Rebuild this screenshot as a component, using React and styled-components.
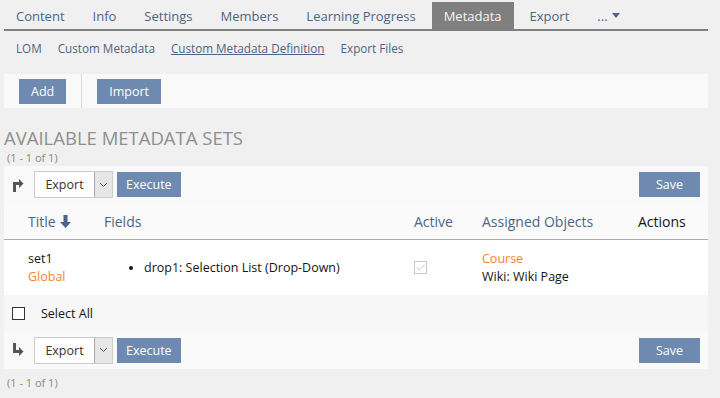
import React from 'react';
import styled, {createGlobalStyle} from 'styled-components';

const Global = createGlobalStyle`
    body {
        margin: 0;
        background: #f0f0f0;
        font-family: "Open Sans", "Liberation Sans", sans-serif;
        color: #161616;
    }
`;

const Page = styled.div`
    width: 704px;
    padding: 0 12px 0 4px;
`;

const Tabs = styled.ul`
    list-style: none;
    display: flex;
    margin: 0;
    padding: 2px 0 0 0;
    height: 27px;
    border-bottom: 2px solid #7f7f7f;
`;

const Tab = styled.li`
    display: flex;
    align-items: center;
    padding: 0 12px;
    margin-right: 4px;
    font-size: 13px;
    color: ${p => (p.active ? '#f4f4f4' : '#4c6586')};
    background: ${p => (p.active ? '#7f7f7f' : 'transparent')};
`;

const Caret = styled.span`
    display: inline-block;
    margin-left: 4px;
    border-left: 4px solid transparent;
    border-right: 4px solid transparent;
    border-top: 5px solid #4c6586;
`;

const SubTabs = styled.ul`
    list-style: none;
    display: flex;
    margin: 0;
    padding: 0 0 0 12px;
    height: 34px;
    align-items: center;
`;

const SubTab = styled.li`
    font-size: 11.7px;
    margin-right: 16px;
    color: #4c6586;
    text-decoration: ${p => (p.active ? 'underline' : 'none')};
`;

const Toolbar = styled.div`
    display: flex;
    align-items: center;
    margin-top: 9px;
    height: 34px;
    background: #f9f9f9;
    padding-left: 15px;
`;

const Sep = styled.div`
    width: 1px;
    align-self: stretch;
    background: #dddddd;
    margin: 0 15px;
`;

const Button = styled.button`
    height: 25px;
    padding: 0 ${p => p.pad || 12}px;
    border: none;
    background: #6e8ab0;
    color: #ffffff;
    font-family: inherit;
    font-size: 12.5px;
`;

const Heading = styled.h2`
    margin: 18px 0 0 0;
    font-size: 18.5px;
    font-weight: 400;
    line-height: 24px;
    color: #8f8f8f;
    text-transform: uppercase;
`;

const Count = styled.div`
    font-size: 11px;
    color: #888888;
    padding-left: 3px;
    line-height: 13px;
    margin-top: ${p => p.top || 1}px;
`;

const Panel = styled.div`
    margin-top: 2px;
`;

const ActionBar = styled.div`
    display: flex;
    align-items: center;
    height: ${p => p.h}px;
    background: #f9f9f9;
    padding: 0 8px 0 4px;
    gap: 4px;
`;

const ArrowBox = styled.div`
    width: 20px;
    margin-right: 2px;
    display: flex;
    justify-content: center;
`;

const Select = styled.div`
    display: flex;
    width: 79px;
    height: 27px;
    box-sizing: border-box;
    border: 1px solid #cccccc;
    background: #ffffff;
`;

const SelectText = styled.span`
    flex: 1;
    display: flex;
    align-items: center;
    justify-content: center;
    font-size: 12.5px;
    color: #333333;
`;

const SelectArrow = styled.span`
    width: 17px;
    display: flex;
    align-items: center;
    justify-content: center;
    background: #e6e6e6;
    border-left: 1px solid #aaaaaa;
`;

const Spacer = styled.div`
    flex: 1;
`;

const Row = styled.div`
    display: grid;
    grid-template-columns: 76px 310px 68px 156px 1fr;
    align-items: center;
    padding-left: 24px;
    height: ${p => p.h}px;
    background: ${p => p.bg};
    border-bottom: ${p => (p.line ? '1px solid #aaaaaa' : 'none')};
    font-size: 12.5px;
`;

const Head = styled.div`
    color: ${p => (p.dark ? '#161616' : '#4c6586')};
    font-size: 14px;
    display: flex;
    align-items: center;
    gap: 4px;
`;

const Cell = styled.div`
    display: flex;
    flex-direction: column;
    line-height: 18px;
`;

const Orange = styled.span`
    color: #f5833a;
`;

const Fields = styled.ul`
    margin: 0;
    padding-left: 40px;
    list-style: disc;
`;

const Check = styled.span`
    display: inline-block;
    width: 13px;
    height: 13px;
    box-sizing: border-box;
    border: 1px solid ${p => (p.disabled ? '#c8c8c8' : '#333333')};
    background: #ffffff;
    position: relative;
`;

const SelectAll = styled.div`
    display: flex;
    align-items: center;
    gap: 16px;
    height: 36px;
    padding-left: 8px;
    background: #f7f7f7;
    font-size: 12.5px;
`;

function Chevron() {
    return (
        <svg width="9" height="6" viewBox="0 0 9 6">
            <path d="M1 1 L4.5 4.5 L8 1" fill="none" stroke="#555" strokeWidth="1" />
        </svg>
    );
}

function UpArrow() {
    return (
        <svg width="12" height="15" viewBox="0 0 12 15">
            <path d="M1 15 V5 H7 V2 L11.5 6.5 L7 11 V8 H4 V15 Z" fill="#555" />
        </svg>
    );
}

function DownArrow() {
    return (
        <svg width="12" height="15" viewBox="0 0 12 15">
            <path d="M1 0 H4 V7 H7 V4 L11.5 8.5 L7 13 V10 H1 Z" fill="#555" />
        </svg>
    );
}

function SortDown() {
    return (
        <svg width="11" height="13" viewBox="0 0 11 13">
            <path d="M3.5 0 H7.5 V7 H11 L5.5 13 L0 7 H3.5 Z" fill="#4c6586" />
        </svg>
    );
}

function Bar({h, icon}) {
    return (
        <ActionBar h={h}>
            <ArrowBox>{icon}</ArrowBox>
            <Select>
                <SelectText>Export</SelectText>
                <SelectArrow><Chevron /></SelectArrow>
            </Select>
            <Button pad={9}>Execute</Button>
            <Spacer />
            <Button pad={17}>Save</Button>
        </ActionBar>
    );
}

export default function App() {
    return (
        <Page>
            <Global />
            <Tabs>
                <Tab>Content</Tab>
                <Tab>Info</Tab>
                <Tab>Settings</Tab>
                <Tab>Members</Tab>
                <Tab>Learning Progress</Tab>
                <Tab active>Metadata</Tab>
                <Tab>Export</Tab>
                <Tab>...<Caret /></Tab>
            </Tabs>
            <SubTabs>
                <SubTab>LOM</SubTab>
                <SubTab>Custom Metadata</SubTab>
                <SubTab active>Custom Metadata Definition</SubTab>
                <SubTab>Export Files</SubTab>
            </SubTabs>
            <Toolbar>
                <Button>Add</Button>
                <Sep />
                <Button>Import</Button>
            </Toolbar>
            <Heading>Available Metadata Sets</Heading>
            <Count>(1 - 1 of 1)</Count>
            <Panel>
                <Bar h={37} icon={<UpArrow />} />
                <Row h={36} bg="#fafafa" line>
                    <Head>Title <SortDown /></Head>
                    <Head>Fields</Head>
                    <Head>Active</Head>
                    <Head>Assigned Objects</Head>
                    <Head dark>Actions</Head>
                </Row>
                <Row h={55} bg="#ffffff">
                    <Cell>
                        <span>set1</span>
                        <Orange>Global</Orange>
                    </Cell>
                    <Fields>
                        <li>drop1: Selection List (Drop-Down)</li>
                    </Fields>
                    <Cell>
                        <Check disabled>
                            <svg width="11" height="11" viewBox="0 0 11 11" style={{position: 'absolute', left: 0, top: 0}}>
                                <path d="M2 5.5 L4.5 8 L9.5 2.5" fill="none" stroke="#c8c8c8" strokeWidth="1" />
                            </svg>
                        </Check>
                    </Cell>
                    <Cell>
                        <Orange>Course</Orange>
                        <span>Wiki: Wiki Page</span>
                    </Cell>
                    <Cell />
                </Row>
                <SelectAll>
                    <Check />
                    <span>Select All</span>
                </SelectAll>
                <Bar h={38} icon={<DownArrow />} />
            </Panel>
            <Count top={7}>(1 - 1 of 1)</Count>
        </Page>
    );
}
